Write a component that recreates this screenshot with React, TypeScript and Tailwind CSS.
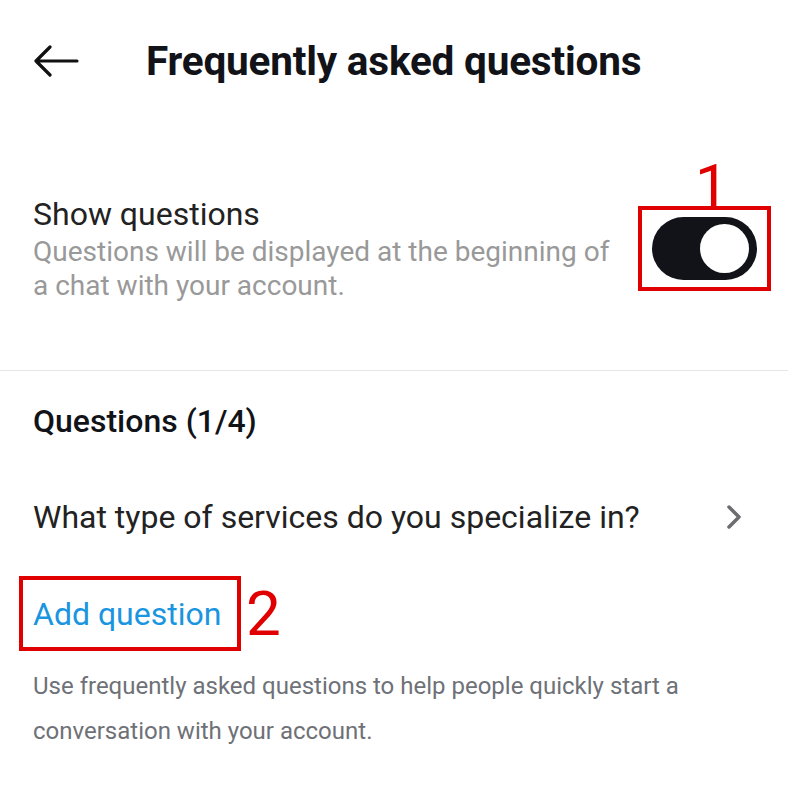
import React from "react";

export default function App() {
  return (
    <div className="w-[788px] h-[800px] bg-white overflow-hidden" style={{ fontFamily: "Roboto, 'Liberation Sans', sans-serif" }}>
      {/* Header */}
      <div className="h-[122px] flex items-center pl-[33px]">
        <svg width="46" height="32" viewBox="0 0 46 32" className="shrink-0">
          <path d="M44 16H3M17 2L3 16l14 14" fill="none" stroke="#111" strokeWidth="3.2" strokeLinecap="round" strokeLinejoin="round" />
        </svg>
        <h1 className="ml-[67px] text-[40.5px] font-bold text-[#111318] leading-none tracking-[-0.2px]">Frequently asked questions</h1>
      </div>

      {/* Show questions */}
      <div className="flex items-start justify-between pl-[33px] pr-[17px] pt-[74px] h-[249px] border-b border-[#e6e6e6]">
        <div className="flex flex-col">
          <div className="text-[32px] text-[#222] leading-[36px]">Show questions</div>
          <div className="text-[28px] text-[#999999] leading-[34px] mt-[3px] w-[594px]">Questions will be displayed at the beginning of a chat with your account.</div>
        </div>
        <div className="relative shrink-0 mt-[10px]">
          <span className="absolute left-[57px] top-[-50px] text-[60px] leading-none text-[#e00000]">1</span>
          <div className="border-[4px] border-[#e00000] w-[133px] h-[85px] flex items-center justify-center">
            <div className="w-[105px] h-[63px] rounded-full bg-[#111318] flex items-center justify-end pr-[8px]">
              <div className="w-[49px] h-[49px] rounded-full bg-white" />
            </div>
          </div>
        </div>
      </div>

      {/* Questions */}
      <div className="pl-[33px] pr-[46px]">
        <div className="pt-[30px] text-[32px] font-medium text-[#111318] leading-[40px]">Questions (1/4)</div>
        <div className="mt-[56px] flex items-center justify-between">
          <span className="text-[32px] text-[#222] leading-[40px]">What type of services do you specialize in?</span>
          <svg width="16" height="26" viewBox="0 0 16 26">
            <path d="M3 3l10 10L3 23" fill="none" stroke="#6b6d70" strokeWidth="3.5" strokeLinecap="round" strokeLinejoin="round" />
          </svg>
        </div>
      </div>

      <div className="pl-[19px] mt-[39px] flex items-center">
        <div className="border-[4px] border-[#e00000] w-[222px] h-[75px] flex items-center pl-[10px]">
          <span className="text-[32px] text-[#1a95e0] leading-none">Add question</span>
        </div>
        <span className="ml-[5px] text-[62px] leading-none text-[#e00000]">2</span>
      </div>

      <div className="pl-[33px] pr-[60px] mt-[13px] text-[24px] text-[#6e7177] leading-[45px]">
        Use frequently asked questions to help people quickly start a conversation with your account.
      </div>
    </div>
  );
}
